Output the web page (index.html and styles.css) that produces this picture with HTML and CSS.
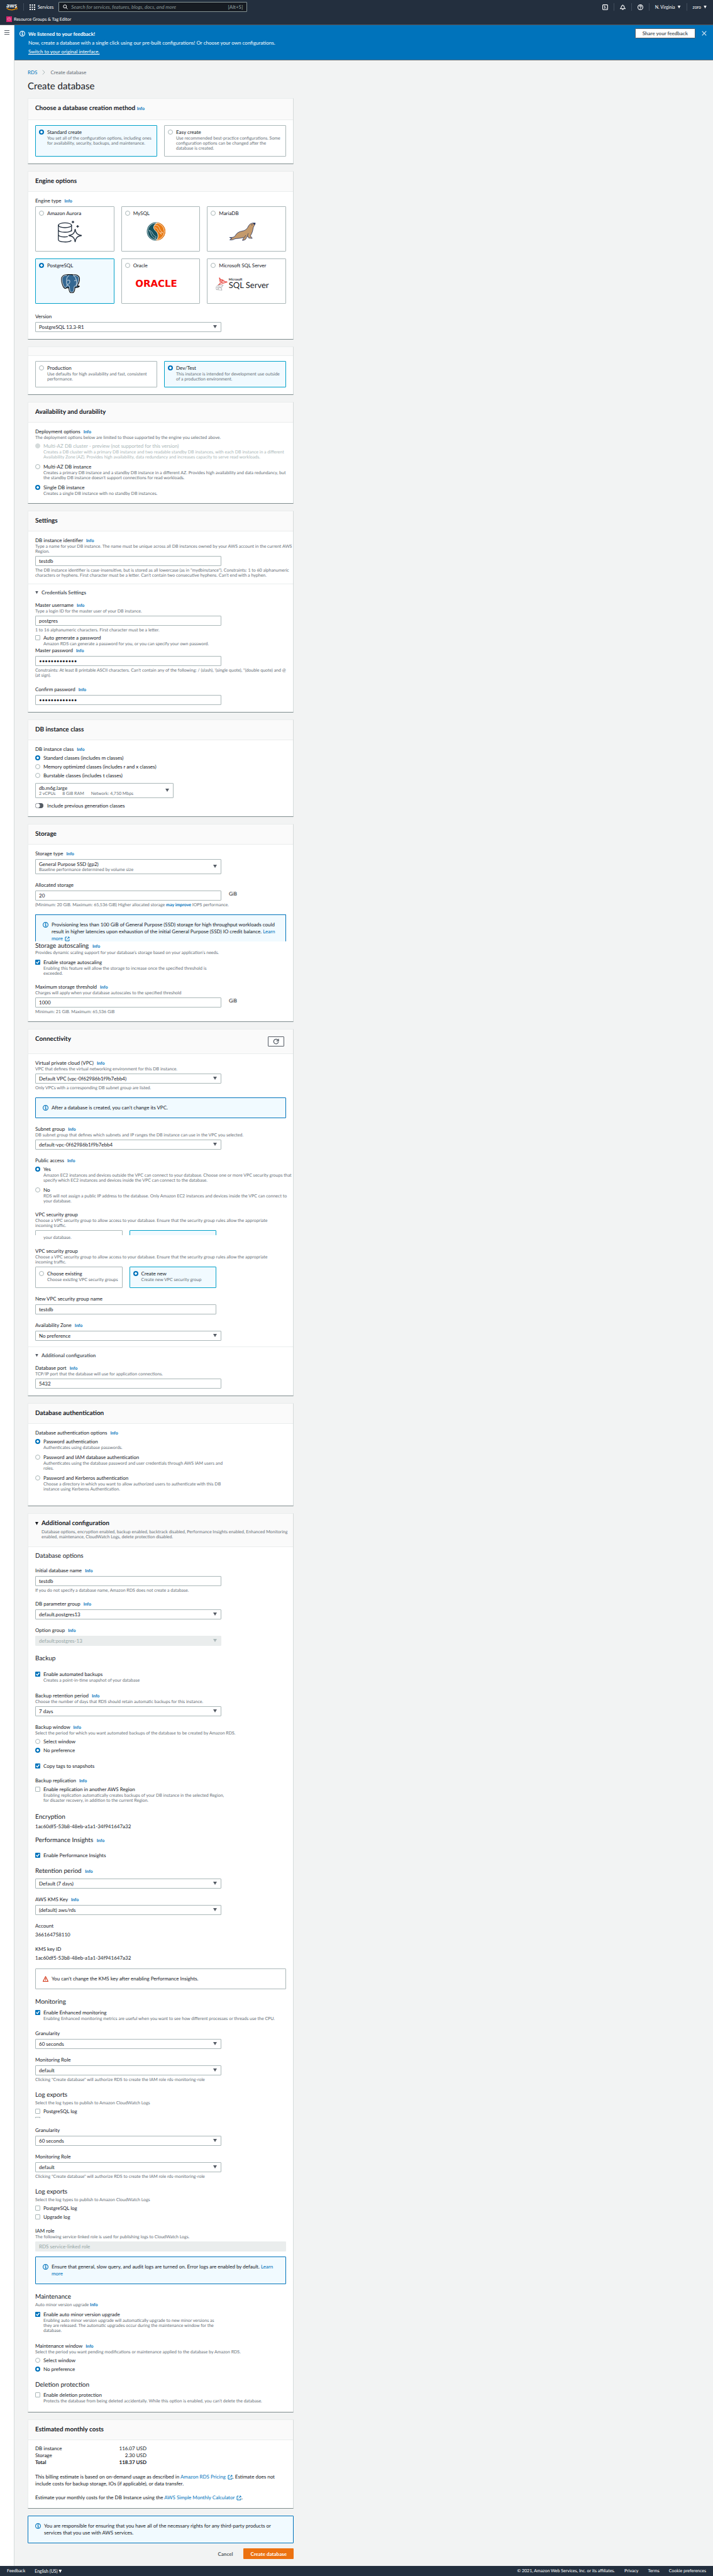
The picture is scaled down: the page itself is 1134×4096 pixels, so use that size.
FILE: index.html
```html
<!DOCTYPE html>
<html lang="en">
<head>
<meta charset="UTF-8">
<meta name="viewport" content="width=device-width, initial-scale=1.0">
<title>Create database - RDS</title>
<link rel="stylesheet" href="styles.css">
</head>
<body>
<svg class="defs" aria-hidden="true">
    <symbol id="i-info" viewBox="0 0 16 16">
        <circle cx="8" cy="8" r="7" fill="none" stroke="currentColor" stroke-width="2"/>
        <path d="M6 7h2.500v5M6 12h5" fill="none" stroke="currentColor" stroke-width="2"/>
        <path d="M7 3h2.500v2.500H7z" fill="currentColor"/>
    </symbol>
    <symbol id="i-external" viewBox="0 0 16 16">
        <path d="M7 2H2v12h12V9M10 2h4v4M14 2L7 9" fill="none" stroke="currentColor" stroke-width="2"/>
    </symbol>
    <symbol id="i-warning" viewBox="0 0 16 16">
        <path d="M8 1.500L15 15H1z" fill="none" stroke="currentColor" stroke-width="2" stroke-linejoin="round"/>
        <path d="M8 6v4M8 11v2" fill="none" stroke="currentColor" stroke-width="2"/>
    </symbol>
</svg>

<header class="topbar">
    <div class="topbar-row">
        <a href="#" class="aws-logo" aria-label="AWS home">
            <svg viewBox="0 0 18 12">
                <text x="0" y="7" class="aws-text">aws</text>
                <path d="M0.500 8c4.500 3.600 11 3.600 15.300.6" fill="none" stroke="#f90" stroke-width="1.200"/>
                <path d="M14 7.700c1.400-.4 3-.4 3.300 0 .2.500-.2 1.900-1 2.800" fill="none" stroke="#f90" stroke-width="1"/>
            </svg>
        </a>
        <span class="bar"></span>
        <button class="services" type="button">
            <svg viewBox="0 0 9 9" fill="#fff">
                <path d="M0 0h2v2H0zM3.500 0h2v2h-2zM7 0h2v2H7zM0 3.500h2v2H0zM3.500 3.500h2v2h-2zM7 3.500h2v2H7zM0 7h2v2H0zM3.500 7h2v2h-2zM7 7h2v2H7z"/>
            </svg>
            Services
        </button>
        <div class="search">
            <svg viewBox="0 0 16 16" fill="none" stroke="#fff" stroke-width="2">
                <circle cx="6.500" cy="6.500" r="5"/><path d="M10 10l5 5"/>
            </svg>
            <input type="search" aria-label="Search" placeholder="Search for services, features, blogs, docs, and more">
            <span>[Alt+S]</span>
        </div>
        <nav class="topbar-tools">
            <button type="button" aria-label="CloudShell">
                <svg viewBox="0 0 16 16" fill="none" stroke="#fff" stroke-width="2"><rect x="1" y="1" width="14" height="14" rx="2"/><path d="M5 4l3 4-3 4M9.500 11h2.500"/></svg>
            </button>
            <button type="button" aria-label="Notifications">
                <svg viewBox="0 0 16 16" fill="none" stroke="#fff" stroke-width="1.800"><path d="M8 1v2M1 12c3-2 3-3 3-5 0-5 8-5 8 0 0 2 0 3 3 5zM6 12.500c0 3 4 3 4 0"/></svg>
            </button>
            <button type="button" aria-label="Help">
                <svg viewBox="0 0 16 16" fill="none" stroke="#fff" stroke-width="2"><circle cx="8" cy="8" r="7"/><path d="M5.500 6.500c0-3.500 5-3.300 5-.3 0 1.800-2.500 1.600-2.500 3.500M8 11v2"/></svg>
            </button>
            <button type="button">N. Virginia <i class="caret"></i></button>
            <button type="button">zoro <i class="caret"></i></button>
        </nav>
    </div>
    <div class="topbar-row">
        <a href="#" class="favorite">
            <svg viewBox="0 0 16 16"><rect width="16" height="16" fill="#d6246e"/><path d="M5 4c-3 2-2 6 0 8M11 4c3 2 2 6 0 8M8 3l-3 3v3l3 4 3-4V6zM8 3v5" fill="none" stroke="#f79bc0" stroke-width="1"/></svg>
            Resource Groups &amp; Tag Editor
        </a>
    </div>
</header>

<div class="shell">
    <aside class="sidebar">
        <button type="button" class="menu" aria-label="Open navigation"><i></i><i></i><i></i></button>
    </aside>
    <div class="page">
        <div class="banner">
            <svg class="icon"><use href="#i-info"/></svg>
            <div class="banner-text">
                <p><strong>We listened to your feedback!</strong></p>
                <p>Now, create a database with a single click using our pre-built configurations! Or choose your own configurations.</p>
                <p><a href="#">Switch to your original interface.</a></p>
            </div>
            <button type="button" class="btn">Share your feedback</button>
            <button type="button" class="close" aria-label="Dismiss">
                <svg viewBox="0 0 8 8"><path d="M.7.7l6.600 6.600M7.300.7L.7 7.300" stroke="#d5e8f5" stroke-width="1.200"/></svg>
            </button>
        </div>

        <main class="content">
            <nav class="breadcrumb">
                <a href="#">RDS</a>
                <svg viewBox="0 0 5 8"><path d="M.8.500L4 4 .8 7.500" fill="none" stroke="#aab7b8"/></svg>
                <span>Create database</span>
            </nav>
            <h1>Create database</h1>

            <section class="card">
                <div class="card-header card-header-tall">
                    <h2>Choose a database creation method <a href="#" class="info">Info</a></h2>
                </div>
                <div class="card-body">
                    <div class="tiles two">
                        <label class="choice tile selected">
                            <input type="radio" name="method" checked>
                            <span>Standard create</span>
                            <span class="hint">You set all of the configuration options, including ones<br>for availability, security, backups, and maintenance.</span>
                        </label>
                        <label class="choice tile">
                            <input type="radio" name="method">
                            <span>Easy create</span>
                            <span class="hint">Use recommended best-practice configurations. Some<br>configuration options can be changed after the<br>database is created.</span>
                        </label>
                    </div>
                </div>
            </section>

            <section class="card">
                <div class="card-header"><h2>Engine options</h2></div>
                <div class="card-body">
                    <div class="label">Engine type <a href="#" class="info">Info</a></div>
                    <div class="tiles three mt-3">
                        <label class="choice tile">
                            <input type="radio" name="engine">
                            <span>Amazon Aurora</span>
                            <span class="logo">
                                <svg width="39" height="35" viewBox="0 0 39 35" fill="none" stroke="#232f3e" stroke-width="1.300">
                                    <ellipse cx="11.300" cy="7.200" rx="10.500" ry="3.800"/>
                                    <path d="M.8 7v23c0 4.500 17 5 20.700 1.200M21.800 7v10M.8 14.500c0 5 21 5 21 0M.8 22c0 3.200 8 4.500 15 3.200"/>
                                    <path d="M27.500 13c.8 7 3.500 9.500 10.500 10.500-7 1-9.700 3.500-10.500 10.500-.8-7-3.500-9.500-10.500-10.500 7-1 9.700-3.500 10.500-10.500z"/>
                                    <path d="M24 0v4M22 2h4M31.500 7v4M29.500 9h4"/>
                                </svg>
                            </span>
                        </label>
                        <label class="choice tile">
                            <input type="radio" name="engine">
                            <span>MySQL</span>
                            <span class="logo">
                                <svg width="30" height="30" viewBox="0 0 30 30">
                                    <circle cx="15" cy="15" r="14.500" fill="#16525f"/>
                                    <path d="M17 .8C11 4 9.500 10 14.500 14c5 4 5 12 .5 15.200A14.200 14.200 0 0 0 17 .8z" fill="#e87a14"/>
                                    <circle cx="15" cy="15" r="13.300" fill="none" stroke="#fff" stroke-width=".7"/>
                                    <path d="M17 1.500C11 4.500 9.500 10 14.500 14c5 4 5 12 .5 15" fill="none" stroke="#fff" stroke-width=".9"/>
                                    <path d="M13 6c4-2.500 7 1 8 5 1 3 3 4 5 6-2-.2-3-.8-3.500-.3s.5 1.800 1.500 2.800c-3-2-5-4-6-7-.6-2-2-3-5-3.500M4 13c2 1 3 1 4.500 3 2 3 3 6 7 7.500-1 1-1 1.500-.5 3-4-1-7-4-8-8-.5-2-2-3-3-5.500z" fill="none" stroke="#fff" stroke-width=".6"/>
                                </svg>
                            </span>
                        </label>
                        <label class="choice tile">
                            <input type="radio" name="engine">
                            <span>MariaDB</span>
                            <span class="logo">
                                <svg width="43" height="29" viewBox="0 0 43 29">
                                    <path d="M42 .7c-2 .2-3-.4-5 .2-4.500 1-5.500 4-7.500 7.500-2 3-5 4.500-9 5.200-5 .8-8.500 3.400-10.500 7.400-1.500 2.500-5 2.600-9 2.500 1.500.8 3 1.200 4 1.500-1.500.5-3 1.200-3.500 2.500 3 .3 5.500-.2 8-1.700 4-.8 9-.6 13.500-2.300.8 1.500-.8 2.500-1.300 4.800 3-.3 6-1.600 6-4.300l2-2.500 2 3 5.500.5c-.5-1.500-2.500-2-2.700-4.500 3-4 3.500-9 4.500-13 .5-2 2.500-3.500 3-6.800z" fill="#c49a6c" stroke="#1f305f" stroke-width=".8"/>
                                    <path d="M38.500.5l3.800.3-.8 2.500-2.300-.8z" fill="#1f305f"/>
                                    <circle cx="36.700" cy="3.500" r=".8" fill="#1f305f"/>
                                    <path d="M31 17c-1 2-1.600 3.500-1 5M27 20l-3 4" stroke="#1f305f" stroke-width=".7" fill="none"/>
                                </svg>
                            </span>
                        </label>
                        <label class="choice tile selected">
                            <input type="radio" name="engine" checked>
                            <span>PostgreSQL</span>
                            <span class="logo">
                                <svg width="30" height="30" viewBox="0 0 30 30">
                                    <path d="M9.500 1C5 .5 1 3 .8 8c0 4 2 12 4.700 14 1.200 1 2.500.5 3.500-.7l3.500.2c.5 2.500.2 7.500 3.500 8 4 .6 5.700-1.500 6.200-8.500 3 .4 5.500-.2 7-1.800-1.500-.2-2.700-.5-3.200-1.200 2-3 3.600-8 3.400-11.500C29 2 24 .2 19.500 1.200 16 0 12.500.2 9.500 1z" fill="#336791" stroke="#111" stroke-width="1.300" stroke-linejoin="round"/>
                                    <path d="M9.500 1.800C5.500 1.200 1.800 3.500 1.700 8c0 4 2 11.500 4.300 13.200C7.500 22 9 18 10 17.500c-1.800-2.500-1-6-1-8.500 0-3 1-5.500 4-7M19.500 2C24.500 1.200 28 3.500 28.300 6.500c.2 3.500-1.800 8.500-3.300 11.500M19.500 2c4 2.500 5.500 7 5.200 11.500 0 2-1 3 .2 5.500M10 17.500c2 .5 3.300.3 3.500 3 .3 3 0 8 3 8.200 3.500.2 4.300-2 4.500-8.500 0-1.300 1.700-1.600 3-1.500M10 10c2.500-1 4-1 4 1 0 2.500-.5 5-4 5M21 11c1-1.500 2.500-1.500 3.500-1" fill="none" stroke="#fff" stroke-width=".8"/>
                                </svg>
                            </span>
                        </label>
                        <label class="choice tile">
                            <input type="radio" name="engine">
                            <span>Oracle</span>
                            <span class="logo"><span class="oracle">ORACLE</span></span>
                        </label>
                        <label class="choice tile">
                            <input type="radio" name="engine">
                            <span>Microsoft SQL Server</span>
                            <span class="logo">
                                <svg width="19" height="21" viewBox="0 0 19 21" fill="none" stroke-width=".7">
                                    <path d="M6 .5c2 4 6 5.500 12.500 7L8 11 4 12c3-2 4-4 2.500-6zM6 1l3 7 9-1M6.500 6L14 5M9 8l-4 4M12 4l-3 4 3 1.500M7 3l5 1" stroke="#e2231a"/>
                                    <path d="M4 12C1 13.500 0 16 1 19.500M4 12l8 .5c-2 2-3.500 5-2 8M1 19.500L10 20.500M4 12c2 2 4 5 6 8M1 16l8-.5M1 19.500c2-1.500 7-3 11-7M4 12c-.5 3 0 6 1 8" stroke="#a7a9ac"/>
                                </svg>
                                <span class="mssql"><small>Microsoft</small>SQL Server</span>
                            </span>
                        </label>
                    </div>
                    <div class="field mt-14">
                        <label for="version">Version</label>
                        <div class="select control"><select id="version"><option>PostgreSQL 13.3-R1</option></select></div>
                    </div>
                </div>
            </section>

            <section class="card">
                <div class="card-header card-header-empty"></div>
                <div class="card-body">
                    <div class="tiles two">
                        <label class="choice tile">
                            <input type="radio" name="template">
                            <span>Production</span>
                            <span class="hint">Use defaults for high availability and fast, consistent<br>performance.</span>
                        </label>
                        <label class="choice tile selected">
                            <input type="radio" name="template" checked>
                            <span>Dev/Test</span>
                            <span class="hint">This instance is intended for development use outside<br>of a production environment.</span>
                        </label>
                    </div>
                </div>
            </section>

            <section class="card">
                <div class="card-header"><h2>Availability and durability</h2></div>
                <div class="card-body">
                    <div class="label">Deployment options <a href="#" class="info">Info</a></div>
                    <p class="hint">The deployment options below are limited to those supported by the engine you selected above.</p>
                    <label class="choice disabled mt-3">
                        <input type="radio" name="deploy" disabled>
                        <span>Multi-AZ DB cluster - preview (not supported for this version)</span>
                        <span class="hint">Creates a DB cluster with a primary DB instance and two readable standby DB instances, with each DB instance in a different<br>Availability Zone (AZ). Provides high availability, data redundancy and increases capacity to serve read workloads.</span>
                    </label>
                    <label class="choice mt-5">
                        <input type="radio" name="deploy">
                        <span>Multi-AZ DB instance</span>
                        <span class="hint">Creates a primary DB instance and a standby DB instance in a different AZ. Provides high availability and data redundancy, but<br>the standby DB instance doesn't support connections for read workloads.</span>
                    </label>
                    <label class="choice mt-5">
                        <input type="radio" name="deploy" checked>
                        <span>Single DB instance</span>
                        <span class="hint">Creates a single DB instance with no standby DB instances.</span>
                    </label>
                </div>
            </section>

            <section class="card">
                <div class="card-header"><h2>Settings</h2></div>
                <div class="card-body">
                    <div class="field">
                        <div class="label"><label for="identifier">DB instance identifier</label> <a href="#" class="info">Info</a></div>
                        <p class="hint">Type a name for your DB instance. The name must be unique across all DB instances owned by your AWS account in the current AWS<br>Region.</p>
                        <input class="control" type="text" id="identifier" value="testdb">
                        <p class="hint">The DB instance identifier is case-insensitive, but is stored as all lowercase (as in "mydbinstance"). Constraints: 1 to 60 alphanumeric<br>characters or hyphens. First character must be a letter. Can't contain two consecutive hyphens. Can't end with a hyphen.</p>
                    </div>
                    <div class="expander">
                        <button type="button"><i class="caret"></i>Credentials Settings</button>
                    </div>
                    <div class="field mt-8">
                        <div class="label"><label for="username">Master username</label> <a href="#" class="info">Info</a></div>
                        <p class="hint">Type a login ID for the master user of your DB instance.</p>
                        <input class="control" type="text" id="username" value="postgres">
                        <p class="hint">1 to 16 alphanumeric characters. First character must be a letter.</p>
                    </div>
                    <label class="choice mt-2">
                        <input type="checkbox">
                        <span>Auto generate a password</span>
                        <span class="hint">Amazon RDS can generate a password for you, or you can specify your own password.</span>
                    </label>
                    <div class="field">
                        <div class="label"><label for="password">Master password</label> <a href="#" class="info">Info</a></div>
                        <input class="control" type="password" id="password" value="postgrespass1">
                        <p class="hint">Constraints: At least 8 printable ASCII characters. Can't contain any of the following: / (slash), '(single quote), "(double quote) and @<br>(at sign).</p>
                    </div>
                    <div class="field mt-12">
                        <div class="label"><label for="confirm">Confirm password</label> <a href="#" class="info">Info</a></div>
                        <input class="control" type="password" id="confirm" value="postgrespass1">
                    </div>
                </div>
            </section>

            <section class="card">
                <div class="card-header"><h2>DB instance class</h2></div>
                <div class="card-body">
                    <div class="label">DB instance class <a href="#" class="info">Info</a></div>
                    <label class="choice mt-2"><input type="radio" name="class" checked><span>Standard classes (includes m classes)</span></label>
                    <label class="choice mt-2"><input type="radio" name="class"><span>Memory optimized classes (includes r and x classes)</span></label>
                    <label class="choice mt-2"><input type="radio" name="class"><span>Burstable classes (includes t classes)</span></label>
                    <div class="select tall narrow mt-6">
                        <select aria-label="Instance size"><option>db.m6g.large</option></select>
                        <p class="select-note"><span>2 vCPUs</span><span>8 GiB RAM</span><span>Network: 4,750 Mbps</span></p>
                    </div>
                    <label class="choice toggle mt-6"><input type="checkbox" role="switch"><span>Include previous generation classes</span></label>
                </div>
            </section>

            <section class="card">
                <div class="card-header"><h2>Storage</h2></div>
                <div class="card-body">
                    <div class="field">
                        <div class="label"><label for="storage-type">Storage type</label> <a href="#" class="info">Info</a></div>
                        <div class="select tall control">
                            <select id="storage-type"><option>General Purpose SSD (gp2)</option></select>
                            <p class="select-note">Baseline performance determined by volume size</p>
                        </div>
                    </div>
                    <div class="field mt-11">
                        <label for="allocated">Allocated storage</label>
                        <div class="with-unit control"><input type="text" id="allocated" value="20"><span>GiB</span></div>
                        <p class="hint">(Minimum: 20 GiB. Maximum: 65,536 GiB) Higher allocated storage <a href="#" class="strong">may improve</a> IOPS performance.</p>
                    </div>
                    <div class="alert alert-cut mt-11">
                        <svg class="icon"><use href="#i-info"/></svg>
                        <p>Provisioning less than 100 GiB of General Purpose (SSD) storage for high throughput workloads could<br>result in higher latencies upon exhaustion of the initial General Purpose (SSD) IO credit balance. <a href="#">Learn<br>more <svg class="ext"><use href="#i-external"/></svg></a></p>
                    </div>
                    <h3>Storage autoscaling <a href="#" class="info">Info</a></h3>
                    <p class="hint">Provides dynamic scaling support for your database’s storage based on your application’s needs.</p>
                    <label class="choice mt-5">
                        <input type="checkbox" checked>
                        <span>Enable storage autoscaling</span>
                        <span class="hint">Enabling this feature will allow the storage to increase once the specified threshold is<br>exceeded.</span>
                    </label>
                    <div class="field mt-11">
                        <div class="label"><label for="threshold">Maximum storage threshold</label> <a href="#" class="info">Info</a></div>
                        <p class="hint">Charges will apply when your database autoscales to the specified threshold</p>
                        <div class="with-unit control"><input type="text" id="threshold" value="1000"><span>GiB</span></div>
                        <p class="hint">Minimum: 21 GiB. Maximum: 65,536 GiB</p>
                    </div>
                </div>
            </section>

            <section class="card">
                <div class="card-header card-header-tall">
                    <h2>Connectivity</h2>
                    <button type="button" class="btn refresh" aria-label="Refresh">
                        <svg viewBox="0 0 16 16" fill="none" stroke="currentColor" stroke-width="2"><path d="M14 9A6 6 0 1 1 12.500 4L14.500 6M14.500 1v5.500H9"/></svg>
                    </button>
                </div>
                <div class="card-body">
                    <div class="field">
                        <div class="label"><label for="vpc">Virtual private cloud (VPC)</label> <a href="#" class="info">Info</a></div>
                        <p class="hint">VPC that defines the virtual networking environment for this DB instance.</p>
                        <div class="select control"><select id="vpc"><option>Default VPC (vpc-0f62986b1f9b7ebb4)</option></select></div>
                        <p class="hint">Only VPCs with a corresponding DB subnet group are listed.</p>
                    </div>
                    <div class="alert mt-11">
                        <svg class="icon"><use href="#i-info"/></svg>
                        <p>After a database is created, you can't change its VPC.</p>
                    </div>
                    <div class="field mt-11">
                        <div class="label"><label for="subnet">Subnet group</label> <a href="#" class="info">Info</a></div>
                        <p class="hint">DB subnet group that defines which subnets and IP ranges the DB instance can use in the VPC you selected.</p>
                        <div class="select control"><select id="subnet"><option>default-vpc-0f62986b1f9b7ebb4</option></select></div>
                    </div>
                    <div class="label mt-11">Public access <a href="#" class="info">Info</a></div>
                    <label class="choice mt-2">
                        <input type="radio" name="public" checked>
                        <span>Yes</span>
                        <span class="hint">Amazon EC2 instances and devices outside the VPC can connect to your database. Choose one or more VPC security groups that<br>specify which EC2 instances and devices inside the VPC can connect to the database.</span>
                    </label>
                    <label class="choice mt-5">
                        <input type="radio" name="public">
                        <span>No</span>
                        <span class="hint">RDS will not assign a public IP address to the database. Only Amazon EC2 instances and devices inside the VPC can connect to<br>your database.</span>
                    </label>
                    <div class="label mt-11">VPC security group</div>
                    <p class="hint">Choose a VPC security group to allow access to your database. Ensure that the security group rules allow the appropriate<br>incoming traffic.</p>
                    <div class="tiles two sg tiles-cut mt-3"><div class="tile"></div><div class="tile selected"></div></div>
                    <p class="hint indent">your database.</p>
                    <div class="label mt-11">VPC security group</div>
                    <p class="hint">Choose a VPC security group to allow access to your database. Ensure that the security group rules allow the appropriate<br>incoming traffic.</p>
                    <div class="tiles two sg mt-3">
                        <label class="choice tile">
                            <input type="radio" name="sg">
                            <span>Choose existing</span>
                            <span class="hint">Choose existing VPC security groups</span>
                        </label>
                        <label class="choice tile selected">
                            <input type="radio" name="sg" checked>
                            <span>Create new</span>
                            <span class="hint">Create new VPC security group</span>
                        </label>
                    </div>
                    <div class="field sg mt-11">
                        <label for="sg-name">New VPC security group name</label>
                        <input class="control" type="text" id="sg-name" value="testdb">
                    </div>
                    <div class="field mt-11">
                        <div class="label"><label for="az">Availability Zone</label> <a href="#" class="info">Info</a></div>
                        <div class="select control"><select id="az"><option>No preference</option></select></div>
                    </div>
                    <div class="expander">
                        <button type="button"><i class="caret"></i>Additional configuration</button>
                    </div>
                    <div class="field mt-8">
                        <div class="label"><label for="port">Database port</label> <a href="#" class="info">Info</a></div>
                        <p class="hint">TCP/IP port that the database will use for application connections.</p>
                        <input class="control" type="text" id="port" value="5432">
                    </div>
                </div>
            </section>

            <section class="card">
                <div class="card-header"><h2>Database authentication</h2></div>
                <div class="card-body card-body-deep">
                    <div class="label">Database authentication options <a href="#" class="info">Info</a></div>
                    <label class="choice mt-2">
                        <input type="radio" name="auth" checked>
                        <span>Password authentication</span>
                        <span class="hint">Authenticates using database passwords.</span>
                    </label>
                    <label class="choice mt-5">
                        <input type="radio" name="auth">
                        <span>Password and IAM database authentication</span>
                        <span class="hint">Authenticates using the database password and user credentials through AWS IAM users and<br>roles.</span>
                    </label>
                    <label class="choice mt-5">
                        <input type="radio" name="auth">
                        <span>Password and Kerberos authentication</span>
                        <span class="hint">Choose a directory in which you want to allow authorized users to authenticate with this DB<br>instance using Kerberos Authentication.</span>
                    </label>
                </div>
            </section>

            <section class="card">
                <div class="card-header card-header-tall with-note">
                    <i class="caret"></i>
                    <div>
                        <h2>Additional configuration</h2>
                        <p class="hint mt-3">Database options, encryption enabled, backup enabled, backtrack disabled, Performance Insights enabled, Enhanced Monitoring<br>enabled, maintenance, CloudWatch Logs, delete protection disabled.</p>
                    </div>
                </div>
                <div class="card-body card-body-options">
                    <h3>Database options</h3>
                    <div class="field mt-10">
                        <div class="label"><label for="db-name">Initial database name</label> <a href="#" class="info">Info</a></div>
                        <input class="control" type="text" id="db-name" value="testdb">
                        <p class="hint">If you do not specify a database name, Amazon RDS does not create a database.</p>
                    </div>
                    <div class="field mt-11">
                        <div class="label"><label for="param-group">DB parameter group</label> <a href="#" class="info">Info</a></div>
                        <div class="select control"><select id="param-group"><option>default.postgres13</option></select></div>
                    </div>
                    <div class="field mt-11">
                        <div class="label"><label for="option-group">Option group</label> <a href="#" class="info">Info</a></div>
                        <div class="select control"><select id="option-group" disabled><option>default:postgres-13</option></select></div>
                    </div>

                    <h3 class="mt-13">Backup</h3>
                    <label class="choice mt-12">
                        <input type="checkbox" checked>
                        <span>Enable automated backups</span>
                        <span class="hint">Creates a point-in-time snapshot of your database</span>
                    </label>
                    <div class="field mt-14">
                        <div class="label"><label for="retention">Backup retention period</label> <a href="#" class="info">Info</a></div>
                        <p class="hint">Choose the number of days that RDS should retain automatic backups for this instance.</p>
                        <div class="select control"><select id="retention"><option>7 days</option></select></div>
                    </div>
                    <div class="label mt-11">Backup window <a href="#" class="info">Info</a></div>
                    <p class="hint">Select the period for which you want automated backups of the database to be created by Amazon RDS.</p>
                    <label class="choice mt-3"><input type="radio" name="backup-window"><span>Select window</span></label>
                    <label class="choice mt-2"><input type="radio" name="backup-window" checked><span>No preference</span></label>
                    <label class="choice mt-13"><input type="checkbox" checked><span>Copy tags to snapshots</span></label>
                    <div class="label mt-11">Backup replication <a href="#" class="info">Info</a></div>
                    <label class="choice mt-2">
                        <input type="checkbox">
                        <span>Enable replication in another AWS Region</span>
                        <span class="hint">Enabling replication automatically creates backups of your DB instance in the selected Region,<br>for disaster recovery, in addition to the current Region.</span>
                    </label>

                    <h3 class="mt-15">Encryption</h3>
                    <p class="mt-2">1ac60df5-53b8-48eb-a1a1-34f941647a32</p>

                    <h3 class="mt-9">Performance Insights <a href="#" class="info">Info</a></h3>
                    <label class="choice mt-11"><input type="checkbox" checked><span>Enable Performance Insights</span></label>

                    <h3 class="mt-12"><label for="pi-retention">Retention period</label> <a href="#" class="info">Info</a></h3>
                    <div class="select mt-5"><select id="pi-retention"><option>Default (7 days)</option></select></div>
                    <div class="field mt-11">
                        <div class="label"><label for="kms">AWS KMS Key</label> <a href="#" class="info">Info</a></div>
                        <div class="select control"><select id="kms"><option>(default) aws/rds</option></select></div>
                    </div>
                    <p class="mt-11">Account</p>
                    <p class="mt-2">366164758110</p>
                    <p class="mt-11">KMS key ID</p>
                    <p class="mt-2">1ac60df5-53b8-48eb-a1a1-34f941647a32</p>
                    <div class="alert alert-warning mt-11">
                        <svg class="icon"><use href="#i-warning"/></svg>
                        <p>You can't change the KMS key after enabling Performance Insights.</p>
                    </div>

                    <h3 class="mt-13">Monitoring</h3>
                    <label class="choice mt-4">
                        <input type="checkbox" checked>
                        <span>Enable Enhanced monitoring</span>
                        <span class="hint">Enabling Enhanced monitoring metrics are useful when you want to see how different processes or threads use the CPU.</span>
                    </label>
                    <div class="field mt-13">
                        <label for="granularity">Granularity</label>
                        <div class="select control"><select id="granularity"><option>60 seconds</option></select></div>
                    </div>
                    <div class="field mt-11">
                        <label for="role">Monitoring Role</label>
                        <div class="select control"><select id="role"><option>default</option></select></div>
                        <p class="hint">Clicking "Create database" will authorize RDS to create the IAM role rds-monitoring-role</p>
                    </div>

                    <h3 class="mt-13">Log exports</h3>
                    <p class="hint mt-2">Select the log types to publish to Amazon CloudWatch Logs</p>
                    <label class="choice mt-3"><input type="checkbox"><span>PostgreSQL log</span></label>
                    <div class="check-cut mt-3"></div>

                    <div class="field mt-13">
                        <label for="granularity-2">Granularity</label>
                        <div class="select control"><select id="granularity-2"><option>60 seconds</option></select></div>
                    </div>
                    <div class="field mt-11">
                        <label for="role-2">Monitoring Role</label>
                        <div class="select control"><select id="role-2"><option>default</option></select></div>
                        <p class="hint">Clicking "Create database" will authorize RDS to create the IAM role rds-monitoring-role</p>
                    </div>

                    <h3 class="mt-13">Log exports</h3>
                    <p class="hint mt-2">Select the log types to publish to Amazon CloudWatch Logs</p>
                    <label class="choice mt-3"><input type="checkbox"><span>PostgreSQL log</span></label>
                    <label class="choice mt-2"><input type="checkbox"><span>Upgrade log</span></label>
                    <div class="field mt-10">
                        <label for="iam-role">IAM role</label>
                        <p class="hint">The following service-linked role is used for publishing logs to CloudWatch Logs.</p>
                        <input class="control wide" type="text" id="iam-role" value="RDS service-linked role" disabled>
                    </div>
                    <div class="alert mt-8">
                        <svg class="icon"><use href="#i-info"/></svg>
                        <p>Ensure that general, slow query, and audit logs are turned on. Error logs are enabled by default. <a href="#">Learn<br>more</a></p>
                    </div>

                    <h3 class="mt-13">Maintenance</h3>
                    <p class="hint mt-2">Auto minor version upgrade <a href="#" class="strong">Info</a></p>
                    <label class="choice mt-5">
                        <input type="checkbox" checked>
                        <span>Enable auto minor version upgrade</span>
                        <span class="hint">Enabling auto minor version upgrade will automatically upgrade to new minor versions as<br>they are released. The automatic upgrades occur during the maintenance window for the<br>database.</span>
                    </label>
                    <div class="label mt-14">Maintenance window <a href="#" class="info">Info</a></div>
                    <p class="hint">Select the period you want pending modifications or maintenance applied to the database by Amazon RDS.</p>
                    <label class="choice mt-3"><input type="radio" name="maint-window"><span>Select window</span></label>
                    <label class="choice mt-2"><input type="radio" name="maint-window" checked><span>No preference</span></label>

                    <h3 class="mt-12">Deletion protection</h3>
                    <label class="choice mt-3">
                        <input type="checkbox">
                        <span>Enable deletion protection</span>
                        <span class="hint">Protects the database from being deleted accidentally. While this option is enabled, you can’t delete the database.</span>
                    </label>
                </div>
            </section>

            <section class="card">
                <div class="card-header"><h2>Estimated monthly costs</h2></div>
                <div class="card-body costs">
                    <table>
                        <tr><td>DB instance</td><td>116.07 USD</td></tr>
                        <tr><td>Storage</td><td>2.30 USD</td></tr>
                        <tr class="total"><td>Total</td><td>118.37 USD</td></tr>
                    </table>
                    <p class="mt-12">This billing estimate is based on on-demand usage as described in <a href="#">Amazon RDS Pricing <svg class="ext"><use href="#i-external"/></svg></a>. Estimate does not<br>include costs for backup storage, IOs (if applicable), or data transfer.</p>
                    <p class="mt-11">Estimate your monthly costs for the DB Instance using the <a href="#">AWS Simple Monthly Calculator <svg class="ext"><use href="#i-external"/></svg></a>.</p>
                </div>
            </section>

            <div class="alert mt-11">
                <svg class="icon"><use href="#i-info"/></svg>
                <p>You are responsible for ensuring that you have all of the necessary rights for any third-party products or<br>services that you use with AWS services.</p>
            </div>
            <div class="actions">
                <button type="button" class="btn-link">Cancel</button>
                <button type="button" class="btn-primary">Create database</button>
            </div>
        </main>
    </div>
</div>

<footer class="footer">
    <a href="#">Feedback</a>
    <button type="button">English (US) <i class="caret"></i></button>
    <span class="copyright">© 2021, Amazon Web Services, Inc. or its affiliates.</span>
    <a href="#">Privacy</a>
    <a href="#">Terms</a>
    <a href="#">Cookie preferences</a>
</footer>
</body>
</html>
```
FILE: styles.css
```css
* {
    box-sizing: border-box;
}
body {
    margin: 0;
    display: flex;
    flex-direction: column;
    min-height: 100vh;
    background: #f2f3f3;
    color: #16191f;
    font-family: Lato, "Noto Sans", sans-serif;
    font-size: 8px;
    line-height: 12px;
    text-rendering: geometricPrecision;
}
p, h1, h2, h3 {
    margin: 0;
}
button, input, select {
    font: inherit;
    color: inherit;
    margin: 0;
}
button {
    padding: 0;
    border: 0;
    background: none;
    cursor: pointer;
}
a {
    color: #0073bb;
    text-decoration: none;
}
svg {
    flex: none;
}
.defs {
    display: none;
}
.icon {
    width: 9px;
    height: 9px;
    margin-top: 1px;
    color: #0073bb;
}
.ext {
    width: 8px;
    height: 8px;
    margin-left: 1px;
    vertical-align: -2px;
}
.caret {
    display: inline-block;
    flex: none;
    width: 5px;
    height: 5px;
    background: currentColor;
    clip-path: polygon(0 0, 100% 0, 50% 100%);
}

/* top navigation */
.topbar {
    background: #232f3e;
    border-bottom: 1px solid #545b64;
    color: #fff;
}
.topbar-row {
    display: flex;
    align-items: center;
    height: 22px;
    padding: 0 10px;
}
.topbar-row + .topbar-row {
    height: 17px;
}
.aws-logo svg {
    display: block;
    width: 18px;
    height: 12px;
    overflow: visible;
}
.aws-text {
    font-family: "Noto Sans", sans-serif;
    font-size: 9px;
    font-weight: 600;
    fill: #fff;
}
.bar {
    width: 1px;
    height: 12px;
    margin: 0 9px;
    background: #414d5c;
}
.services {
    display: flex;
    align-items: center;
    gap: 4px;
    font-size: 7px;
}
.services svg {
    width: 9px;
    height: 9px;
}
.search {
    display: flex;
    align-items: center;
    gap: 5px;
    flex: 0 1 300px;
    height: 16px;
    margin-left: 8px;
    padding: 0 6px;
    border: 1px solid #879596;
    border-radius: 1px;
    background: #161b22;
    color: #95a5a6;
}
.search svg {
    width: 8px;
    height: 8px;
}
.search input {
    flex: 1;
    min-width: 0;
    height: 12px;
    padding: 0;
    border: 0;
    background: none;
}
.search input::placeholder {
    color: #879596;
    font-style: italic;
}
.topbar-tools {
    display: flex;
    margin-left: auto;
}
.topbar-tools button {
    display: flex;
    align-items: center;
    gap: 4px;
    height: 12px;
    padding: 0 9px;
    border-left: 1px solid #414d5c;
    font-size: 7px;
}
.topbar-tools button:first-child {
    border-left: 0;
}
.topbar-tools button:last-child {
    padding-right: 0;
}
.topbar-tools svg {
    width: 9px;
    height: 9px;
}
.favorite {
    display: flex;
    align-items: center;
    gap: 3px;
    color: #fff;
    font-size: 7px;
}
.favorite svg {
    width: 9px;
    height: 9px;
}

/* page frame */
.shell {
    display: flex;
    flex: 1;
}
.sidebar {
    flex: none;
    width: 23px;
    padding: 8px 0 0 7px;
    border-right: 1px solid #d5dbdb;
    background: #fff;
}
.menu {
    display: flex;
    flex-direction: column;
    gap: 2px;
    width: 8px;
}
.menu i {
    height: 1px;
    background: #545b64;
}
.page {
    flex: 1;
    min-width: 0;
}
.banner {
    display: flex;
    align-items: flex-start;
    padding: 5px 10px 6px 8px;
    border-bottom: 1px solid #687078;
    background: #0073bb;
    color: #fff;
}
.banner .icon {
    margin: 4px 5px 0 0;
    color: #fff;
}
.banner-text {
    flex: 1;
    padding-top: 2px;
    line-height: 14px;
}
.banner a {
    color: #fff;
    text-decoration: underline;
}
.btn {
    height: 16px;
    padding: 0 11px;
    border: 1px solid #545b64;
    border-radius: 1px;
    background: #fff;
    color: #545b64;
    font-weight: 700;
}
.close {
    width: 8px;
    margin: 4px 0 0 10px;
    line-height: 8px;
}
.close svg {
    width: 8px;
    height: 8px;
}
.content {
    max-width: 444px;
    padding: 13px 0 11px 21px;
}
.breadcrumb {
    display: flex;
    align-items: center;
    gap: 8px;
    color: #687078;
}
.breadcrumb svg {
    width: 5px;
    height: 8px;
}
h1 {
    margin: 6px 0 9px;
    font-size: 15px;
    font-weight: 400;
    line-height: 20px;
}
h2 {
    font-size: 10px;
    font-weight: 700;
    line-height: 13px;
}
h3 {
    font-size: 10px;
    font-weight: 400;
    line-height: 14px;
}

/* cards */
.card {
    border: 1px solid #eaeded;
    border-right-color: #d5dbdb;
    border-bottom-color: #7f8c8d;
    background: #fff;
}
.card + .card {
    margin-top: 11px;
}
.card-header {
    display: flex;
    justify-content: space-between;
    padding: 9px 11px;
    border-bottom: 1px solid #eaeded;
    background: #fafafa;
}
.card-header-tall {
    padding-bottom: 11px;
}
.card-header-empty {
    padding: 13px 0 0;
}
.with-note {
    justify-content: flex-start;
    gap: 5px;
}
.with-note .caret {
    margin-top: 4px;
}
.card-header h2 .info {
    margin-left: 0;
}
.card-body {
    padding: 8px 11px 11px;
}
.card-body-deep {
    padding-bottom: 22px;
}
.card-body-options {
    padding-top: 7px;
    padding-bottom: 13px;
}
.refresh {
    width: 26px;
    margin: 2px 3px 0 0;
    padding: 0;
    line-height: 9px;
}
.refresh svg {
    width: 10px;
    height: 10px;
    vertical-align: middle;
}

/* labels and hints */
.field {
    display: flex;
    flex-direction: column;
}
.info {
    margin-left: 3px;
    font-size: 7px;
    font-weight: 700;
    line-height: 1;
}
.strong {
    font-weight: 700;
}
.hint {
    color: #687078;
    font-size: 7px;
    line-height: 8px;
    white-space: nowrap;
}
.indent {
    padding-left: 13px;
}

/* controls */
.control {
    margin-top: 3px;
}
.control + .hint {
    margin-top: 3px;
}
input[type="text"], input[type="password"], select {
    width: 100%;
    height: 16px;
    padding: 0 5px;
    border: 1px solid #aab7b8;
    border-radius: 1px;
    background: #fff;
    appearance: none;
}
input.control, .select, .with-unit input {
    max-width: 296px;
}
input.wide {
    max-width: none;
}
input:disabled, select:disabled {
    border-color: #eaeded;
    background: #eaeded;
    color: #95a5a6;
    opacity: 1;
}
.select {
    position: relative;
    color: #16191f;
}
.select select {
    display: block;
}
.select::after {
    content: "";
    position: absolute;
    top: calc(50% - 3px);
    right: 7px;
    width: 6px;
    height: 5px;
    background: #545b64;
    clip-path: polygon(0 0, 100% 0, 50% 100%);
    pointer-events: none;
}
.select:has(:disabled)::after {
    background: #aab7b8;
}
.select.tall select {
    height: 24px;
    padding-bottom: 8px;
}
.select-note {
    position: absolute;
    left: 6px;
    bottom: 3px;
    display: flex;
    gap: 11px;
    color: #687078;
    font-size: 7px;
    line-height: 8px;
    pointer-events: none;
}
.select.narrow {
    max-width: 220px;
}
.with-unit {
    display: flex;
    gap: 12px;
    line-height: 11px;
}
.with-unit input {
    flex: 1;
}

/* radio, checkbox, toggle */
.choice {
    display: grid;
    grid-template-columns: 8px 1fr;
    column-gap: 5px;
    align-content: start;
}
.choice input {
    width: 8px;
    height: 8px;
    margin: 2px 0 0;
    border: 1px solid #aab7b8;
    background: #fff;
    appearance: none;
}
.choice input[type="radio"] {
    border-radius: 50%;
}
.choice input[type="checkbox"] {
    border-radius: 1px;
}
.choice input[type="radio"]:checked {
    border: 0;
    background: radial-gradient(circle closest-side, #fff 38%, #0073bb 48%);
}
.choice input[type="checkbox"]:checked {
    border: 0;
    background: #0073bb;
}
.choice input[type="checkbox"]:checked::after {
    content: "";
    display: block;
    height: 8px;
    background: #fff;
    clip-path: polygon(14% 54%, 27% 42%, 42% 58%, 74% 16%, 88% 27%, 44% 83%);
}
.choice .hint {
    grid-column: 2;
}
.choice.disabled, .choice.disabled .hint {
    color: #aab7b8;
}
.choice.disabled input {
    border-color: #d5dbdb;
    background: #d5dbdb;
}
.toggle {
    grid-template-columns: 13px 1fr;
    column-gap: 6px;
}
.choice.toggle input {
    width: 13px;
    border: 0;
    border-radius: 4px;
    background: radial-gradient(circle at 4px 4px, #fff 3px, #545b64 4px);
}
.check-cut {
    width: 8px;
    height: 2px;
    border: 1px solid #aab7b8;
    border-bottom: 0;
    border-radius: 1px 1px 0 0;
}

/* tiles */
.tiles {
    display: grid;
    gap: 11px;
}
.two {
    grid-template-columns: 1fr 1fr;
}
.three {
    grid-template-columns: 1fr 1fr 1fr;
}
.sg {
    max-width: 288px;
}
.tile {
    padding: 4px 5px 8px;
    border: 1px solid #aab7b8;
    border-radius: 1px;
    background: #fff;
}
.tile.selected {
    border-color: #00a1c9;
    background: #f1faff;
}
.tiles-cut {
    height: 8px;
    overflow: hidden;
}
.logo {
    grid-column: 1 / -1;
    display: flex;
    align-items: center;
    justify-content: center;
    gap: 2px;
    height: 46px;
    padding-right: 14px;
}
.oracle {
    color: #f80000;
    font-family: "DejaVu Sans", sans-serif;
    font-size: 15px;
    font-weight: 700;
}
.mssql {
    font-size: 13px;
    line-height: 12px;
}
.mssql small {
    display: block;
    font-size: 5px;
    font-weight: 700;
    line-height: 4px;
}

/* alerts */
.alert {
    display: flex;
    gap: 5px;
    padding: 10px 11px;
    border: 1px solid #0073bb;
    border-radius: 1px;
    background: #f1faff;
    line-height: 11px;
    white-space: nowrap;
}
.alert-warning {
    border-color: #aab7b8;
    background: #fff;
}
.alert-warning .icon {
    color: #d13212;
}
.alert-cut {
    height: 43px;
    overflow: hidden;
    border-bottom: 0;
}

/* expandable parts */
.expander {
    margin: 9px -11px 0;
    padding: 7px 11px 0;
    border-top: 1px solid #eaeded;
}
.expander button {
    display: flex;
    align-items: center;
    gap: 5px;
    color: #545b64;
    font-weight: 700;
}

/* costs and actions */
.costs {
    line-height: 11px;
}
.costs table {
    width: 177px;
    border-spacing: 0;
}
.costs td {
    padding: 0;
}
.costs td + td {
    text-align: right;
}
.total {
    font-weight: 700;
}
.actions {
    display: flex;
    justify-content: flex-end;
    gap: 17px;
    margin-top: 8px;
    font-weight: 700;
}
.btn-link {
    color: #545b64;
}
.btn-primary {
    height: 17px;
    padding: 0 11px;
    border-radius: 1px;
    background: #ec7211;
    color: #fff;
}

/* footer */
.footer {
    display: flex;
    align-items: center;
    gap: 15px;
    height: 16px;
    padding: 0 11px;
    background: #232f3e;
    color: #fff;
    font-size: 7px;
}
.footer a {
    color: #fff;
}
.copyright {
    margin-left: auto;
}

/* spacing */
.mt-2 { margin-top: 2px; }
.mt-3 { margin-top: 3px; }
.mt-4 { margin-top: 4px; }
.mt-5 { margin-top: 5px; }
.mt-6 { margin-top: 6px; }
.mt-8 { margin-top: 8px; }
.mt-9 { margin-top: 9px; }
.mt-10 { margin-top: 10px; }
.mt-11 { margin-top: 11px; }
.mt-12 { margin-top: 12px; }
.mt-13 { margin-top: 13px; }
.mt-14 { margin-top: 14px; }
.mt-15 { margin-top: 15px; }
```
